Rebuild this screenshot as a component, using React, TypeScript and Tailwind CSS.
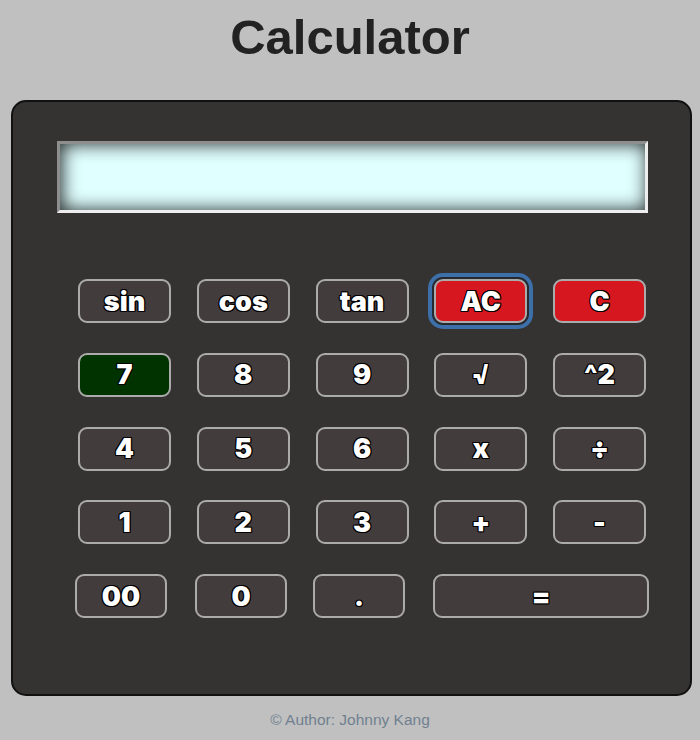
import React from "react";

const btnText =
  "font-['Inter',sans-serif] font-black text-[27px] text-white [text-shadow:-1px_-1px_0_#000,1px_-1px_0_#000,-1px_1px_0_#000,1px_1px_0_#000,0_1px_0_#000,0_-1px_0_#000,1px_0_0_#000,-1px_0_0_#000]";

function Btn({
  label,
  bg = "bg-[#433c3c]",
  extra = "",
  w = "w-[93px]",
}: {
  label: string;
  bg?: string;
  extra?: string;
  w?: string;
}) {
  return (
    <button
      className={`${w} h-[44px] rounded-[9px] border-2 border-[#ababab] ${bg} ${btnText} flex items-center justify-center leading-none ${extra}`}
    >
      {label}
    </button>
  );
}

export default function App() {
  return (
    <div className="w-[700px] h-[740px] bg-[#c0c0c0] overflow-hidden font-['Liberation_Sans',Arial,sans-serif]">
      <h1 className="pt-[13px] h-[60px] text-center text-[49px] leading-none font-bold text-[#222222] font-['Liberation_Sans',Arial,sans-serif]">
        Calculator
      </h1>
      <div className="mt-[40px] ml-[11px] w-[681px] h-[596px] rounded-[15px] border-2 border-[#111111] bg-[#353332] pt-[39px]">
        <div className="ml-[44px] w-[591px] h-[72px] border-[3px] border-t-[#8e8e8e] border-l-[#8e8e8e] border-b-[#eeeeee] border-r-[#eeeeee] bg-[#e0ffff] shadow-[inset_2px_0_18px_rgba(0,0,0,0.85)]" />
        <div className="mt-[66px] ml-[65px] grid grid-cols-[repeat(5,93px)] gap-x-[25.75px] gap-y-[29.75px]">
          <Btn label="sin" />
          <Btn label="cos" />
          <Btn label="tan" />
          <Btn
            label="AC"
            bg="bg-[#d6171f]"
            extra="shadow-[0_0_0_2px_#26292d,0_0_0_6px_#3d6fa8]"
          />
          <Btn label="C" bg="bg-[#d6171f]" />
          <Btn label="7" bg="bg-[#003300]" />
          <Btn label="8" />
          <Btn label="9" />
          <Btn label="√" />
          <Btn label="^2" />
          <Btn label="4" />
          <Btn label="5" />
          <Btn label="6" />
          <Btn label="x" />
          <Btn label="÷" />
          <Btn label="1" />
          <Btn label="2" />
          <Btn label="3" />
          <Btn label="+" />
          <Btn label="-" />
        </div>
        <div className="mt-[30px] ml-[62px] flex">
          <Btn label="00" w="w-[92px]" />
          <Btn label="0" w="w-[92px]" extra="ml-[28px]" />
          <Btn label="." w="w-[92px]" extra="ml-[26px]" />
          <Btn label="=" w="w-[216px]" extra="ml-[28px]" />
        </div>
      </div>
      <p className="mt-[16px] text-center text-[15.5px] leading-none text-[#708090]">
        © Author: Johnny Kang
      </p>
    </div>
  );
}
